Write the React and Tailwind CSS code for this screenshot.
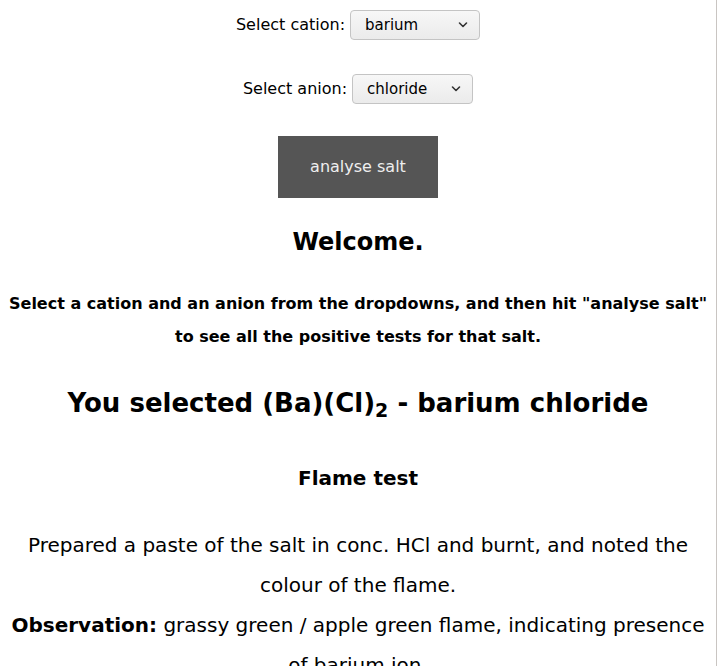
const Chevron = () => (
    <svg width="12" height="8" viewBox="0 0 12 8" className="ml-auto">
        <path d="M2.5 2 L6 5.5 L9.5 2" fill="none" stroke="#333" strokeWidth="1.6" strokeLinecap="round" strokeLinejoin="round" />
    </svg>
);

const FakeSelect = ({ value, width }) => (
    <div
        className={`flex items-center h-[30px] ${width} pl-[14px] pr-[10px] border border-[#c4c4c4] rounded-[4px] bg-gradient-to-b from-[#f7f7f7] to-[#ebebeb] text-[15px] text-black`}
    >
        <span>{value}</span>
        <Chevron />
    </div>
);

const App = () => {
    return (
        <div className="w-[717px] min-h-[666px] border-r border-[#c9c5c2] text-black text-center font-['DejaVu_Sans',sans-serif]">
            <div className="flex items-center justify-center gap-[5px] pt-[10px] text-[16px]">
                <span>Select cation:</span>
                <FakeSelect value="barium" width="w-[130px]" />
            </div>
            <div className="flex items-center justify-center gap-[5px] mt-[34px] text-[16px]">
                <span>Select anion:</span>
                <FakeSelect value="chloride" width="w-[121px]" />
            </div>
            <div className="flex justify-center mt-[32px]">
                <button className="w-[160px] h-[62px] bg-[#555555] text-[#eeeeee] text-[16px]">
                    analyse salt
                </button>
            </div>
            <h1 className="text-[24px] font-bold mt-[29px] leading-[30px]">Welcome.</h1>
            <p className="text-[16px] font-bold leading-[33px] mt-[30px] px-[6px]">
                Select a cation and an anion from the dropdowns, and then hit "analyse salt" to see all the positive tests for that salt.
            </p>
            <h2 className="text-[26px] font-bold mt-[30px] leading-[40px]">
                You selected (Ba)(Cl)<sub className="text-[19px]">2</sub> - barium chloride
            </h2>
            <h3 className="text-[20px] font-bold mt-[40px] leading-[30px]">Flame test</h3>
            <div className="text-[20px] leading-[40px] mt-[32px] px-[8px]">
                <p>Prepared a paste of the salt in conc. HCl and burnt, and noted the colour of the flame.</p>
                <p>
                    <b>Observation:</b> grassy green / apple green flame, indicating presence of barium ion.
                </p>
            </div>
        </div>
    );
};

export default App;
